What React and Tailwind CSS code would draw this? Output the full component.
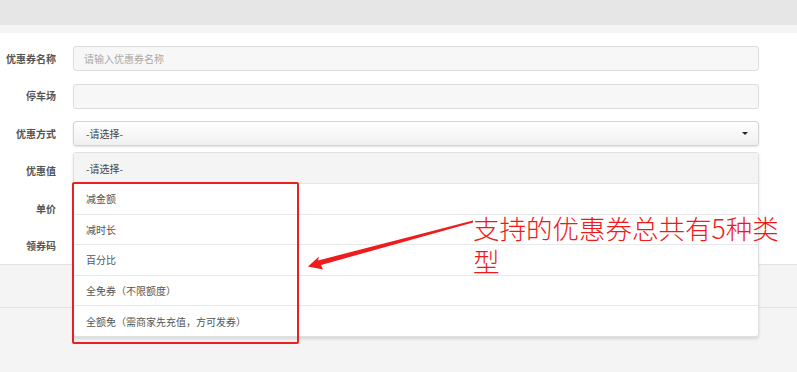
import React from "react";

const font = { fontFamily: '"Noto Sans CJK SC", "Noto Sans", sans-serif' };

function Row({ label, children }) {
  return (
    <div className="flex items-center h-[25px]">
      <div className="w-[56px] text-right text-[10px] font-bold text-[#555] leading-none">{label}</div>
      <div className="ml-[17px] flex-1">{children}</div>
    </div>
  );
}

function Input({ placeholder }) {
  return (
    <div className="h-[25px] rounded-[3px] border border-[#dcdcdc] bg-[#f7f7f7] px-[10px] flex items-center text-[10px] text-[#a8a8a8]">
      {placeholder}
    </div>
  );
}

const options = ["减金额", "减时长", "百分比", "全免券（不限额度）", "全额免（需商家先充值，方可发券）"];

export default function App() {
  return (
    <div className="relative w-[797px] h-[372px] overflow-hidden bg-[#f4f4f4]" style={font}>
      <div className="h-[25px] bg-[#e6e6e6]" />
      <div className="h-[8px] bg-[#f4f4f4]" />
      <div className="h-[231px] bg-white pt-[13px] pr-[38px] flex flex-col gap-[12.5px]">
        <Row label="优惠券名称"><Input placeholder="请输入优惠券名称" /></Row>
        <Row label="停车场"><Input placeholder="" /></Row>
        <Row label="优惠方式">
          <div className="h-[25px] rounded-[3px] border border-[#d4d4d4] bg-gradient-to-b from-white to-[#f0f0f0] shadow-[0_1px_2px_rgba(0,0,0,0.12)] pl-[12px] pr-[10px] flex items-center justify-between text-[10px] text-[#444]">
            <span>-请选择-</span>
            <span className="w-0 h-0 border-l-[3.5px] border-r-[3.5px] border-t-[3.5px] border-l-transparent border-r-transparent border-t-[#222]" />
          </div>
        </Row>
        <Row label="优惠值"><Input placeholder="" /></Row>
        <Row label="单价"><Input placeholder="" /></Row>
        <Row label="领券码"><Input placeholder="" /></Row>
      </div>
      <div className="h-[44px] border-t border-b border-[#e2e2e2] bg-[#f4f4f4]" />

      {/* dropdown */}
      <div className="absolute left-[73px] top-[152px] w-[686px] rounded-[3px] border border-[#e0e0e0] bg-white shadow-[0_2px_3px_rgba(0,0,0,0.12)] text-[10px] text-[#555]">
        <div className="h-[31px] bg-[#f4f4f4] flex items-center pl-[12px] text-[#444] border-b border-[#e6e6e6]">-请选择-</div>
        {options.map((o, i) => (
          <div
            key={o}
            className={
              i < options.length - 1
                ? "h-[30.5px] flex items-center pl-[12px] border-b border-[#e8e8e8]"
                : "h-[30px] flex items-center pl-[12px]"
            }
          >
            {o}
          </div>
        ))}
      </div>

      {/* red highlight box */}
      <div className="absolute left-[72px] top-[182px] w-[227px] h-[162px] border-2 border-[#e8201e] rounded-[2px]" />

      {/* arrow */}
      <svg className="absolute left-0 top-0" width="797" height="372" viewBox="0 0 797 372">
        <polygon
          points="308,266.5 319,256.5 318,260.5 473,220.5 473,222.5 321,265 323,269.5"
          fill="#ee1c1c"
        />
      </svg>

      {/* annotation */}
      <div className="absolute left-[473px] top-[211px] text-[26.5px] leading-[33px] font-light text-[#f01818]">
        <div>支持的优惠券总共有5种类</div>
        <div>型</div>
      </div>
    </div>
  );
}
